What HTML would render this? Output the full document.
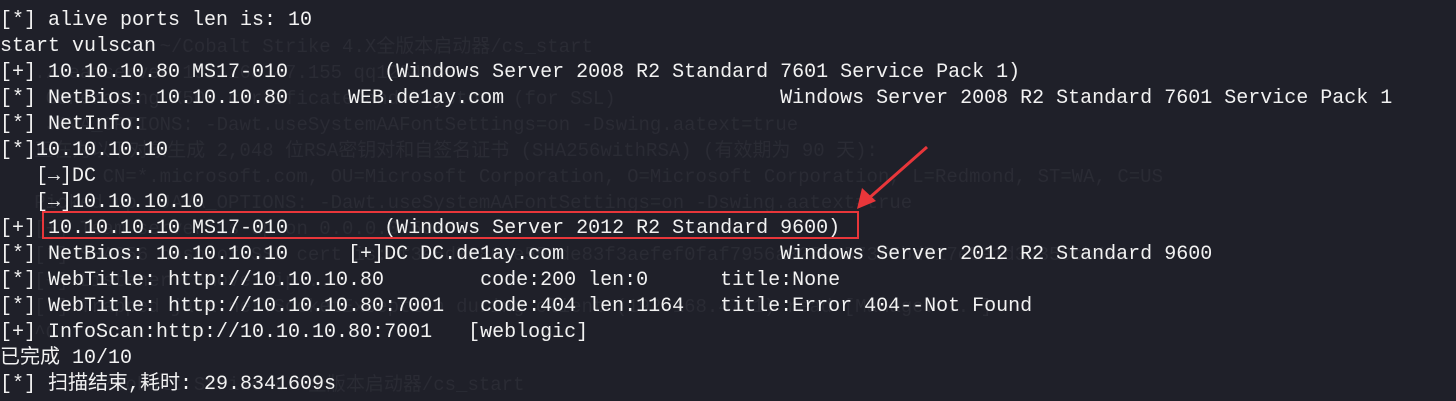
<!DOCTYPE html><html><head><meta charset="utf-8"><style>
html,body{margin:0;width:1456px;height:401px;overflow:hidden}
body{background:#1f2029;position:relative}
.t{position:absolute;left:0;top:-18px;font:20px/26px "Liberation Mono","Noto Sans CJK SC",monospace;color:#f2f2f2;white-space:pre}
.g{position:absolute;left:0;top:8px;font:19px/26px "Liberation Mono","Noto Sans CJK SC",monospace;color:#2a2b34;white-space:pre}
</style></head><body>
<div class="g">
              ~/Cobalt Strike 4.X全版本启动器/cs_start
   ./teamserver 192.168.47.155 qq123456
    Generating X509 certificate and keystore (for SSL)
    JAVA_OPTIONS: -Dawt.useSystemAAFontSettings=on -Dswing.aatext=true
   正在为以下对象生成 2,048 位RSA密钥对和自签名证书 (SHA256withRSA) (有效期为 90 天):
         CN=*.microsoft.com, OU=Microsoft Corporation, O=Microsoft Corporation, L=Redmond, ST=WA, C=US
   Picked up _JAVA_OPTIONS: -Dawt.useSystemAAFontSettings=on -Dswing.aatext=true
   [+] Team server is up on 0.0.0.0:50050
   [*] SHA256 hash of SSL cert is: f3e5d72861e551de83f3aefef0faf7956a32584573f5bd717e5e1d32350bb451
   [+] Listener remove: ip ...
   [!] Trapped java.net.SocketException during client (192.168.47.1) read [Manage: ...]
   ^C

        ~/Cobalt Strike 4.X全版本启动器/cs_start</div>
<div class="t">
[*] alive ports len is: 10
start vulscan
[+] 10.10.10.80 MS17-010        (Windows Server 2008 R2 Standard 7601 Service Pack 1)
[*] NetBios: 10.10.10.80     WEB.de1ay.com                       Windows Server 2008 R2 Standard 7601 Service Pack 1
[*] NetInfo:
[*]10.10.10.10
   [→]DC
   [→]10.10.10.10
[+] 10.10.10.10 MS17-010        (Windows Server 2012 R2 Standard 9600)
[*] NetBios: 10.10.10.10     [+]DC DC.de1ay.com                  Windows Server 2012 R2 Standard 9600
[*] WebTitle: http://10.10.10.80        code:200 len:0      title:None
[*] WebTitle: http://10.10.10.80:7001   code:404 len:1164   title:Error 404--Not Found
[+] InfoScan:http://10.10.10.80:7001   [weblogic]
已完成 10/10
[*] 扫描结束,耗时: 29.8341609s</div>
<div style="position:absolute;left:42px;top:211px;width:813px;height:24px;border:2px solid #e8363a"></div>
<svg style="position:absolute;left:0;top:0" width="1456" height="401"><line x1="927" y1="147" x2="868" y2="199" stroke="#e8363a" stroke-width="3"/><polygon points="857,209 862,188 876,201" fill="#e8363a"/></svg>
</body></html>
